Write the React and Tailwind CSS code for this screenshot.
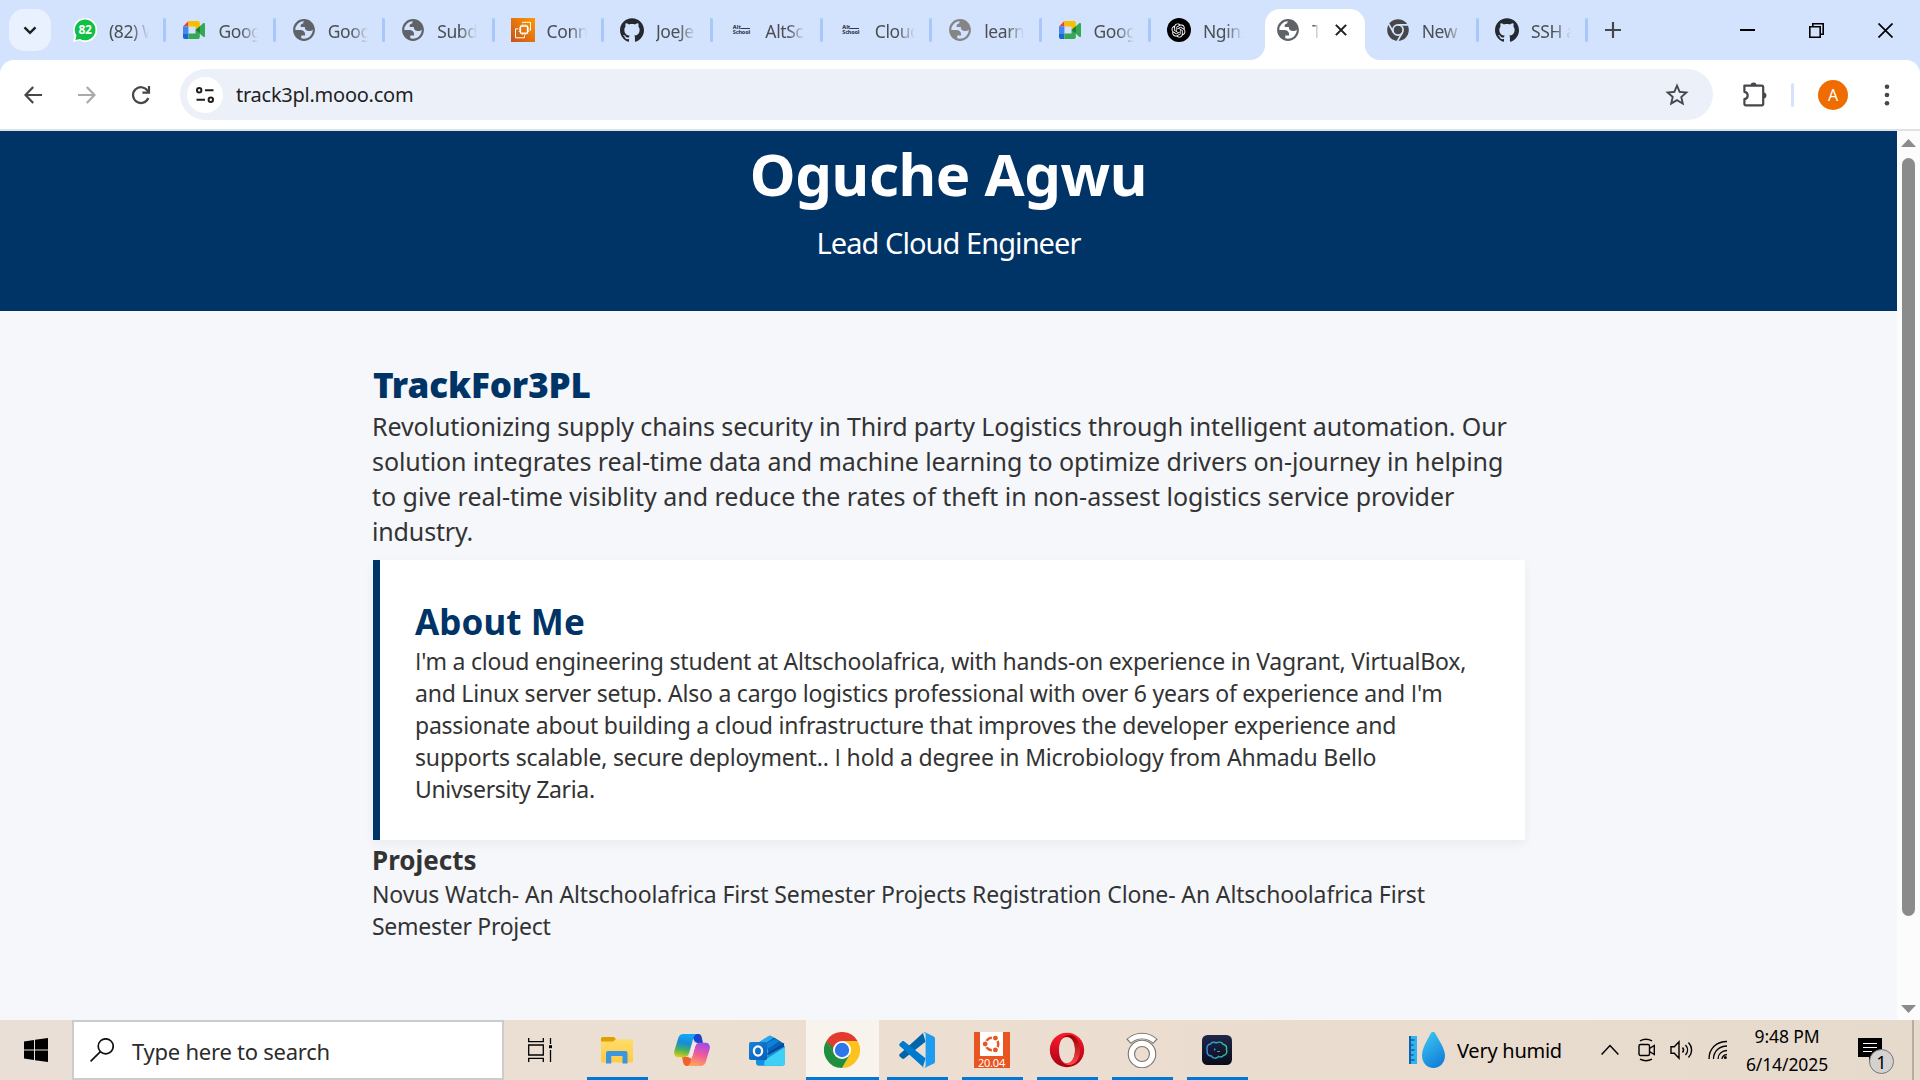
import { RiOpenaiFill } from "react-icons/ri";
import { SiGithub } from "react-icons/si";
import { MdStarBorder } from "react-icons/md";

/* ---------- favicons ---------- */

function GlobeIcon({ className = "text-[#5f6368]" }) {
  return (
    <svg viewBox="1 1 22 22" className={`h-6 w-6 shrink-0 ${className}`}>
      <path
        fill="currentColor"
        fillRule="evenodd"
        d="M12 2c5.523 0 10 4.477 10 10s-4.477 10-10 10S2 17.523 2 12 6.477 2 12 2zM4 12h4.400c3.407.022 4.922 1.730 4.543 5.127H9.488v2.470a8.004 8.004 0 0 0 10.498-8.083C19.327 12.504 18.206 13 16.622 13c-2.610 0-3.916-1.250-3.916-3.750H8.974C8.690 7.088 9.437 6.006 11.216 6.006c0-.977.326-1.655.979-2.003A8 8 0 0 0 4 12z"
      />
    </svg>
  );
}

function MeetIcon() {
  return (
    <svg viewBox="0 0 24 24" className="h-6 w-6 shrink-0">
      <path d="M1 8.400 6.400 3v5.400z" fill="#ea4335" />
      <path d="M1 8.400h5.400v7.200H1z" fill="#4285f4" />
      <path d="M1 15.600h5.400V21H2.800A1.800 1.800 0 0 1 1 19.200z" fill="#1967d2" />
      <path d="M6.400 3H16a1.800 1.800 0 0 1 1.800 1.800v3.700L13.500 12V8.400H6.400z" fill="#fbbc04" />
      <path d="M6.400 21v-5.400h7.100V12l4.300 3.500v3.700A1.800 1.800 0 0 1 16 21z" fill="#34a853" />
      <path d="M13.500 12l7.700-6.800c.7-.6 1.800-.2 1.800.8v12c0 1-1.100 1.400-1.800.8z" fill="#34a853" />
      <path d="M13.500 12l4.300-3.700v7.200z" fill="#188038" />
    </svg>
  );
}

function WhatsAppIcon() {
  return (
    <span className="relative flex h-6 w-6 shrink-0 items-center justify-center">
      <svg viewBox="0 0 24 24" className="absolute inset-0 h-6 w-6">
        <path d="M12 0a12 12 0 1 1-5.400 22.600L0 24l1.500-6.300A12 12 0 0 1 12 0z" fill="#fff" />
        <path d="M12 1.500a10.400 10.400 0 1 1-5 19.500l-4.600 1.100 1.100-4.500A10.400 10.400 0 0 1 12 1.500z" fill="#0fc143" />
      </svg>
      <span className="relative text-[12px] leading-none font-bold tracking-[-0.3px] text-white">82</span>
    </span>
  );
}

function Ec2Icon() {
  return (
    <svg viewBox="0 0 24 24" className="h-6 w-6 shrink-0">
      <defs>
        <linearGradient id="ec2" x1="0" y1="1" x2="1" y2="0">
          <stop offset="0" stopColor="#c8511b" />
          <stop offset="1" stopColor="#f90" />
        </linearGradient>
      </defs>
      <path d="M0 0h24v24H0z" fill="url(#ec2)" />
      <g fill="none" stroke="#fff" strokeWidth="1">
        <path d="M9.500 8.200h7v7h-7z" strokeWidth="1.300" />
        <path d="M11.300 6.500v1.700M13 6.500v1.700M14.800 6.500v1.700M11.300 15.200v1.700M13 15.200v1.700M14.800 15.200v1.700M7.800 10h1.700M7.800 11.700h1.700M7.800 13.400h1.700M16.500 10h1.700M16.500 11.700h1.700M16.500 13.400h1.700" />
        <path d="M11.500 5.200V4.300h8v8h-1M7 10.800H4.500v9h9v-2.300" />
      </g>
    </svg>
  );
}

function GithubIcon() {
  return <SiGithub className="h-6 w-6 shrink-0 text-[#24292f]" />;
}

function AltSchoolIcon() {
  return (
    <span className="flex h-6 w-6 shrink-0 flex-col items-center justify-center text-[5.500px] leading-[5px] font-extrabold text-[#33384d]">
      <span className="flex w-[17px] items-center">
        Alt
        <span className="mt-[2px] h-px flex-1 bg-[#33384d]" />
      </span>
      <span className="w-[17px] tracking-[-0.2px]">School</span>
    </span>
  );
}

function OpenAiIcon() {
  return (
    <span className="flex h-6 w-6 shrink-0 items-center justify-center rounded-full bg-black">
      <RiOpenaiFill className="h-[17px] w-[17px] text-white" />
    </span>
  );
}

function ChromeMonoIcon() {
  return (
    <svg viewBox="0 0 24 24" className="h-6 w-6 shrink-0">
      <circle cx="12" cy="12" r="10.800" fill="#45474a" />
      <g stroke="#d3e3fd" strokeWidth="1.700" fill="none">
        <path d="M12 6.900h10M7.600 14.500l-5-8.700M16.400 14.500l-5 8.700" />
        <circle cx="12" cy="12" r="5.100" />
      </g>
      <circle cx="12" cy="12" r="4" fill="#45474a" />
    </svg>
  );
}

/* ---------- browser chrome ---------- */

const tabs = [
  { icon: <WhatsAppIcon />, title: "(82) W", sep: true },
  { icon: <MeetIcon />, title: "Goog", sep: true },
  { icon: <GlobeIcon />, title: "Goog", sep: true },
  { icon: <GlobeIcon />, title: "Subd", sep: true },
  { icon: <Ec2Icon />, title: "Conn", sep: true },
  { icon: <GithubIcon />, title: "JoeJe", sep: true },
  { icon: <AltSchoolIcon />, title: "AltSc", sep: true },
  { icon: <AltSchoolIcon />, title: "Cloud", sep: true },
  { icon: <GlobeIcon className="text-[#858585]" />, title: "learn", sep: true },
  { icon: <MeetIcon />, title: "Goog", sep: true },
  { icon: <OpenAiIcon />, title: "Nginx", sep: false },
  { icon: <GlobeIcon />, title: "T", active: true },
  { icon: <ChromeMonoIcon />, title: "New", sep: true },
  { icon: <GithubIcon />, title: "SSH a", sep: true },
];

function Tab({ icon, title, sep }) {
  return (
    <div className="flex h-full w-[109.400px] shrink-0 items-center">
      <div className="flex flex-1 items-center pl-[16px]">
        {icon}
        <span className="ml-[12px] w-[41px] overflow-hidden pt-[2px] text-[17.500px] leading-6 tracking-[-0.400px] whitespace-nowrap text-[#4c4e52] [mask-image:linear-gradient(to_right,black_55%,transparent_98%)]">
          {title}
        </span>
      </div>
      <span className={sep ? "h-6 w-[3px] rounded-full bg-[#a8c7fa]" : "w-[3px]"} />
    </div>
  );
}

function ActiveTab({ icon, title }) {
  return (
    <div className="flex h-full w-[109.400px] shrink-0 items-end pl-[5px]">
      <div className="relative flex h-[51px] w-[100px] items-start rounded-t-[15px] bg-white pt-[9px] pl-[11px]">
        <span className="absolute bottom-0 -left-[15px] h-[15px] w-[15px] bg-[radial-gradient(circle_at_0_0,transparent_14.500px,white_15.500px)]" />
        <span className="absolute -right-[15px] bottom-0 h-[15px] w-[15px] bg-[radial-gradient(circle_at_100%_0,transparent_14.500px,white_15.500px)]" />
        {icon}
        <span className="ml-[12px] w-[6px] overflow-hidden pt-px text-[17.500px] leading-6 text-[#45474a] [mask-image:linear-gradient(to_right,black_20%,transparent_105%)]">
          {title}
        </span>
        <svg viewBox="0 0 14 14" className="mt-[6px] ml-[17px] h-3 w-3 shrink-0" fill="none" stroke="#1f1f1f" strokeWidth="2.400">
          <path d="M1 1l12 12M13 1L1 13" />
        </svg>
      </div>
    </div>
  );
}

function TabStrip() {
  return (
    <div className="flex h-[60px] items-center bg-[#d3e3fd]">
      <div className="ml-[9px] flex h-[42px] w-[42px] shrink-0 items-center justify-center rounded-[15px] bg-[#e9f1fe]">
        <svg viewBox="0 0 14 9" className="h-[9px] w-[14px]" fill="none" stroke="#1f1f1f" strokeWidth="2.400">
          <path d="M1.500 1.300L7 6.800l5.500-5.500" />
        </svg>
      </div>
      <div className="ml-[6px] flex h-full items-center">
        {tabs.map((t, i) => (t.active ? <ActiveTab key={i} {...t} /> : <Tab key={i} {...t} />))}
      </div>
      <svg viewBox="0 0 16 16" className="ml-[17px] h-4 w-4" fill="none" stroke="#45474a" strokeWidth="2.200">
        <path d="M8 0v16M0 8h16" />
      </svg>
      <div className="mr-[27px] ml-auto flex items-center gap-[54px]">
        <svg viewBox="0 0 15 15" className="h-[15px] w-[15px]">
          <path d="M0 6h15v2H0z" />
        </svg>
        <svg viewBox="0 0 15 15" className="h-[15px] w-[15px]" fill="none" stroke="#000" strokeWidth="1.600">
          <path d="M.8 3.800h10.400v10.400H.8zM3.800 3.800V.8h10.400v10.400h-3" />
        </svg>
        <svg viewBox="0 0 15 15" className="h-[15px] w-[15px]" fill="none" stroke="#000" strokeWidth="1.700">
          <path d="M.5.5l14 14M14.500.5l-14 14" />
        </svg>
      </div>
    </div>
  );
}

function Toolbar() {
  return (
    <div className="bg-[#d3e3fd]">
      <div className="flex h-[71px] items-center rounded-t-[14px] border-b-2 border-[#e1e2e5] bg-white">
        <svg viewBox="0 0 18 18" className="ml-[24px] h-[18px] w-[18px]" fill="none" stroke="#45474a" strokeWidth="2.200">
          <path d="M9.200.9L1.500 9l7.700 8.100M1.700 9H18" />
        </svg>
        <svg viewBox="0 0 18 18" className="ml-[36px] h-[18px] w-[18px]" fill="none" stroke="#a9aaab" strokeWidth="2.200">
          <path d="M8.800.9L16.500 9l-7.700 8.100M16.300 9H0" />
        </svg>
        <svg viewBox="0 0 20 20" className="ml-[35px] h-5 w-5" fill="none" stroke="#45474a" strokeWidth="2.200">
          <path d="M17.300 13A7.900 7.900 0 1 1 16.500 5.700L18 7.500" />
          <path d="M18 1v6.700h-6.600" />
        </svg>
        <div className="ml-[29px] flex h-[51px] w-[1533px] items-center rounded-full bg-[#ecf0f9] pr-[22px] pl-[7px]">
          <div className="flex h-9 w-9 items-center justify-center rounded-full bg-white">
            <svg viewBox="0 0 18 16" className="h-[16px] w-[18px]" fill="none" stroke="#1f1f1f" strokeWidth="2">
              <circle cx="3.200" cy="3.200" r="2.200" />
              <circle cx="14.800" cy="12.800" r="2.200" />
              <path d="M9 3.200h8.500M.5 12.800H9" />
            </svg>
          </div>
          <span className="ml-[13px] text-[20px] leading-7 tracking-[-0.250px] text-[#1f1f1f]">track3pl.mooo.com</span>
          <MdStarBorder className="ml-auto h-[28px] w-[28px] text-[#45474a]" />
        </div>
        <svg viewBox="0 0 25 25" className="ml-[29px] h-[25px] w-[25px]">
          <path
            d="M2.400 3.600h17.200a1.600 1.600 0 0 1 1.600 1.600v16.600a1.600 1.600 0 0 1-1.600 1.600H3.900a1.500 1.500 0 0 1-1.500-1.500v-4.700c2.300-.4 3.300-1.900 3.300-3.700s-1-3.300-3.300-3.700z"
            fill="none"
            stroke="#45474a"
            strokeWidth="2.200"
            strokeLinejoin="round"
          />
          <path d="M8.600 3.600a3 3 0 0 1 6 0zM21.400 10.400a3 3 0 0 1 0 6z" fill="#45474a" />
        </svg>
        <span className="ml-[24px] h-6 w-[3px] rounded-full bg-[#d3e3fd]" />
        <span className="ml-[24px] flex h-[30px] w-[30px] items-center justify-center rounded-full bg-[#ef6c00] text-[16px] leading-none text-white">
          A
        </span>
        <svg viewBox="0 0 6 24" className="ml-[36px] h-6 w-[6px]" fill="#45474a">
          <circle cx="3" cy="3.800" r="2.300" />
          <circle cx="3" cy="12" r="2.300" />
          <circle cx="3" cy="20.200" r="2.300" />
        </svg>
      </div>
    </div>
  );
}

/* ---------- web page ---------- */

/* Capital I without serifs */
function PlainI() {
  return <span className="font-['Open_Sans']">I</span>;
}

function Page() {
  return (
    <div className="flex h-[889px]">
      <div className="w-[1897px] bg-[#f5f7fb] text-[#333]">
        <header className="h-[180px] bg-[#003366] text-center text-white">
          <h1 className="text-[58px] leading-[86px] font-bold tracking-[-0.400px]">Oguche Agwu</h1>
          <p className="mt-[6px] text-[29px] leading-10 tracking-[-0.940px]">Lead Cloud Engineer</p>
        </header>
        <main className="ml-[373px] w-[1152px] pt-[52px] whitespace-nowrap">
          <h2 className="text-[35px] leading-[44px] font-black tracking-[-0.100px] text-[#003366]">TrackFor3PL</h2>
          <div className="mt-[2px] text-[25px] leading-[35px]">
            <p className="-ml-px tracking-[-0.110px]">Revolutionizing supply chains security in Third party Logistics through intelligent automation. Our</p>
            <p className="-ml-px tracking-[-0.080px]">solution integrates real-time data and machine learning to optimize drivers on-journey in helping</p>
            <p className="-ml-px tracking-[-0.020px]">to give real-time visiblity and reduce the rates of theft in non-assest logistics service provider</p>
            <p className="-ml-px tracking-[-0.150px]">industry.</p>
          </div>
          <section className="mt-[11px] h-[280px] border-l-7 border-[#003366] bg-white pt-[41px] pl-[35px] shadow-[0_4px_10px_rgba(0,0,0,0.05)]">
            <h2 className="text-[35px] leading-[42px] font-bold tracking-[0.100px] text-[#003366]">About Me</h2>
            <div className="mt-[2px] text-[23px] leading-8">
              <p className="tracking-[-0.215px]"><PlainI />'m a cloud engineering student at Altschoolafrica, with hands-on experience in Vagrant, VirtualBox,</p>
              <p className="tracking-[-0.220px]">and Linux server setup. Also a cargo logistics professional with over 6 years of experience and <PlainI />'m</p>
              <p className="tracking-[-0.235px]">passionate about building a cloud infrastructure that improves the developer experience and</p>
              <p className="tracking-[-0.170px]">supports scalable, secure deployment.. <PlainI /> hold a degree in Microbiology from Ahmadu Bello</p>
              <p className="tracking-[-0.330px]">Univsersity Zaria.</p>
            </div>
          </section>
          <h3 className="mt-1 -ml-px text-[26px] leading-8 font-bold">Projects</h3>
          <div className="mt-[2px] text-[23px] leading-8">
            <p className="-ml-px tracking-[-0.130px]">Novus Watch- An Altschoolafrica First Semester Projects Registration Clone- An Altschoolafrica First</p>
            <p className="-ml-px tracking-[-0.280px]">Semester Project</p>
          </div>
        </main>
      </div>
      <div className="flex w-[23px] flex-col items-center bg-[#fcfcfc] pt-2 pb-[7px]">
        <svg viewBox="0 0 15 8" className="h-2 w-[15px]" fill="#8b8b8b">
          <path d="M7.500 0L15 8H0z" />
        </svg>
        <div className="mt-[11px] h-[758px] w-[13px] rounded-full bg-[#8b8b8b]" />
        <svg viewBox="0 0 15 8" className="mt-auto h-2 w-[15px]" fill="#8b8b8b">
          <path d="M7.500 8L0 0h15z" />
        </svg>
      </div>
    </div>
  );
}

/* ---------- taskbar icons ---------- */

function FolderIcon() {
  return (
    <svg viewBox="0 0 36 36" className="h-9 w-9">
      <defs>
        <linearGradient id="fold" x1="0" y1="0" x2="0" y2="1">
          <stop offset="0" stopColor="#ffdc6b" />
          <stop offset="1" stopColor="#ffcb45" />
        </linearGradient>
      </defs>
      <path d="M2 6.500A1.500 1.500 0 0 1 3.500 5H15l2 2-2 3H2z" fill="#e0a100" />
      <path d="M2 9.500h12l3-2.200h15.500A1.500 1.500 0 0 1 34 8.800V29a1.500 1.500 0 0 1-1.500 1.500h-29A1.500 1.500 0 0 1 2 29z" fill="url(#fold)" />
      <path d="M7 31.500V21a2 2 0 0 1 2-2h17.500a2 2 0 0 1 2 2v10.500h-5V24H12.300v7.500z" fill="#3a96dd" />
    </svg>
  );
}

function CopilotIcon() {
  return (
    <svg viewBox="0 0 36 36" className="h-9 w-9">
      <defs>
        <linearGradient id="cpa" x1="0.300" y1="0" x2="0.100" y2="1">
          <stop offset="0" stopColor="#12a5f4" />
          <stop offset="0.350" stopColor="#178bd8" />
          <stop offset="0.650" stopColor="#49b35c" />
          <stop offset="1" stopColor="#f2cf0c" />
        </linearGradient>
        <linearGradient id="cpb" x1="0.700" y1="0" x2="0.400" y2="1">
          <stop offset="0" stopColor="#a348e8" />
          <stop offset="0.500" stopColor="#ee5b9b" />
          <stop offset="1" stopColor="#ffa35c" />
        </linearGradient>
      </defs>
      <path d="M17 2h7.500c2 0 2.800 1.600 3.300 3.400L29 11h-5c-2 0-3.300-1-4-3z" fill="#1b45d0" />
      <path d="M19 34h-6.500c-2 0-2.800-1.600-3.300-3.400L8 25h6c2 0 3 1 3.600 3z" fill="#f4602b" />
      <path d="M9.500 2h13c-2.200.8-3 3.500-3.800 6.500l-3.500 12c-.9 3-2.200 4.700-5.200 4.700H4.500C1 25.200-.4 22.500.3 19L4.300 6c.8-2.600 2.400-4 5.200-4z" fill="url(#cpa)" />
      <path d="M26.500 34h-13c2.200-.8 3-3.500 3.800-6.500l3.500-12c.9-3 2.200-4.700 5.200-4.700h5.500c3.500 0 4.900 2.700 4.200 6.200l-4 13c-.8 2.600-2.400 4-5.200 4z" fill="url(#cpb)" />
      <path d="M18.500 12.500c1-1.300 2-1.700 3.300-1.700h.4l-3.700 13c-.6 1.500-1.500 2-3.800 2z" fill="#f4e9ee" />
    </svg>
  );
}

function OutlookIcon() {
  return (
    <svg viewBox="0 0 36 36" className="h-9 w-9">
      <defs>
        <linearGradient id="olk" x1="0" y1="0" x2="1" y2="1">
          <stop offset="0" stopColor="#1784d8" />
          <stop offset="1" stopColor="#0a5cb8" />
        </linearGradient>
      </defs>
      <path d="M7 12L19.500 3.900a3 3 0 0 1 3 0L35 12v6L16 25l-9-3z" fill="#28a8ea" />
      <path d="M17 11l8-5.500L35.500 12 20 22z" fill="#0364b8" />
      <path d="M16 12l10-5 4 2.500L14 20z" fill="#1180d8" />
      <path d="M18 21.500L35 11v5L20 24.500z" fill="#0c4595" />
      <path d="M7 21l10 3 19-10v16.500a3.300 3.300 0 0 1-3.300 3.300H10A3 3 0 0 1 7 31z" fill="#1490df" />
      <path d="M36 15v15.500a3.300 3.300 0 0 1-3.300 3.300H16c-2-2.500 0-6 2.500-7.500z" fill="#3fd0f8" />
      <rect x="0" y="10" width="18" height="18" rx="1.800" fill="url(#olk)" />
      <ellipse cx="9" cy="19" rx="4.100" ry="4.700" fill="none" stroke="#fff" strokeWidth="2.300" />
    </svg>
  );
}

function ChromeIcon() {
  return (
    <svg viewBox="0 0 36 36" className="h-9 w-9">
      <path d="M18 18L2.400 9A18 18 0 0 1 33.600 9z" fill="#e33b2e" />
      <path d="M18 9h15.600A18 18 0 0 1 18 36l7.800-13.500z" fill="#fcc31e" />
      <path d="M25.800 22.500L18 36A18 18 0 0 1 2.400 9l7.800 13.500z" fill="#1f8e3e" />
      <path d="M2.400 9H18v9l-7.800 4.500z" fill="#e33b2e" />
      <path d="M2.400 9l7.800 13.500L14 20z" fill="#1f8e3e" />
      <circle cx="18" cy="18" r="9" fill="#fff" />
      <circle cx="18" cy="18" r="7.200" fill="#2f76ea" />
    </svg>
  );
}

function VsCodeIcon() {
  return (
    <svg viewBox="0 0 36 36" className="h-9 w-9">
      <path d="M26.500 9.800L5.300 26.600c-.8.6-1.600.6-2.300 0l-2.200-2c-.8-.8-.8-2 0-2.700L24 1z" fill="#0065a9" />
      <path d="M26.500 26.200L5.300 9.400c-.8-.6-1.600-.6-2.300 0l-2.200 2c-.8.8-.8 2 0 2.700L24 35z" fill="#007acc" />
      <path d="M26 35.800c-1 .5-2 .2-2.800-.5 1.300 1 3.400.2 3.400-1.600V2.300c0-1.800-2.100-2.600-3.400-1.600.8-.7 1.800-1 2.800-.5l8.300 4c1 .4 1.700 1.300 1.700 2.400v22.800c0 1.100-.7 2-1.700 2.400z" fill="#1f9cf0" />
    </svg>
  );
}

function UbuntuIcon() {
  return (
    <span className="flex h-9 w-9 flex-col items-center bg-[#e95420]">
      <svg viewBox="0 0 23 24" className="h-6 w-[23px]">
        <path d="M0 0h23v24H0z" fill="#fff" />
        <circle cx="12" cy="12" r="6.300" fill="none" stroke="#e95420" strokeWidth="2.500" />
        <g fill="#e95420" stroke="#fff" strokeWidth="1.200">
          <circle cx="5.200" cy="12" r="3" />
          <circle cx="15.400" cy="6.100" r="3" />
          <circle cx="15.400" cy="17.900" r="3" />
        </g>
      </svg>
      <span className="mt-[2px] text-[11px] leading-[10px] tracking-[-0.200px] text-white">20.04</span>
    </span>
  );
}

function OperaIcon() {
  return (
    <svg viewBox="0 0 36 36" className="h-9 w-9">
      <defs>
        <linearGradient id="opa" x1="0" y1="0" x2="0" y2="1">
          <stop offset="0" stopColor="#ff1b2d" />
          <stop offset="1" stopColor="#a70014" />
        </linearGradient>
        <linearGradient id="opb" x1="0" y1="0" x2="0" y2="1">
          <stop offset="0" stopColor="#9c0000" />
          <stop offset="1" stopColor="#ff4b4b" />
        </linearGradient>
      </defs>
      <path
        fillRule="evenodd"
        d="M18 .8c9.600 0 17.200 7.700 17.200 17.200S27.600 35.200 18 35.200.8 27.500.8 18 8.400.8 18 .8zm0 3.700c-4.800 0-8 5.700-8 13.500s3.200 13.500 8 13.500 8-5.700 8-13.500-3.200-13.500-8-13.500z"
        fill="url(#opa)"
      />
      <path d="M12 7.600C14 4.800 17 3 20.200 3 27 3 31 9.700 31 18s-4 15-10.800 15c-3.200 0-6.200-1.800-8.200-4.600 5.300 5.600 14 2.600 14-10.400S17.300 2 12 7.600z" fill="url(#opb)" />
    </svg>
  );
}

function OpenVpnIcon() {
  return (
    <svg viewBox="0 0 36 36" className="h-9 w-9">
      <g fill="none">
        <path d="M4.600 9.600C12 2.200 24 2.200 31.400 9.600" stroke="#7d746c" strokeWidth="6.600" />
        <path d="M5.400 8.800C12.500 2.500 23.500 2.500 30.600 8.800" stroke="#fff" strokeWidth="4.600" />
        <circle cx="18" cy="22" r="10.600" stroke="#7d746c" strokeWidth="7.400" />
        <circle cx="18" cy="22" r="10.600" stroke="#fff" strokeWidth="5.200" />
      </g>
    </svg>
  );
}

function TermiusIcon() {
  return (
    <svg viewBox="0 0 30 30" className="h-[30px] w-[30px]">
      <defs>
        <linearGradient id="trb" x1="0" y1="0" x2="0" y2="1">
          <stop offset="0" stopColor="#20264a" />
          <stop offset="1" stopColor="#090c1a" />
        </linearGradient>
        <linearGradient id="trl" x1="0" y1="0" x2="1" y2="0">
          <stop offset="0" stopColor="#2f8fe8" />
          <stop offset="1" stopColor="#2fc487" />
        </linearGradient>
      </defs>
      <rect width="30" height="30" rx="5.500" fill="url(#trb)" />
      <path
        d="M8.500 9c1-2 3.800-2.400 5.800-1.100 2.300-1 5.500-1 6.700 1.300 2.700.3 4.300 2.800 3.400 5.300 1.400 2.500-.2 5.600-2.900 5.900-1.300 1.700-3.300 1.900-4.900 1-1.700 2.400-5.600 2.300-7.100-.3-3 0-5-2.500-4.200-5.100-1.300-3.600.2-6.600 3.200-7z"
        fill="none"
        stroke="url(#trl)"
        strokeWidth="1.500"
      />
      <path d="M12 13l2 1.500-2 1.500z" fill="#2f8fe8" />
      <path d="M15 16.500h3" stroke="#2fa0c8" strokeWidth="1" />
    </svg>
  );
}

const apps = [
  { icon: <FolderIcon />, open: true },
  { icon: <CopilotIcon />, open: false },
  { icon: <OutlookIcon />, open: false },
  { icon: <ChromeIcon />, open: true, active: true },
  { icon: <VsCodeIcon />, open: true },
  { icon: <UbuntuIcon />, open: true },
  { icon: <OperaIcon />, open: true },
  { icon: <OpenVpnIcon />, open: true },
  { icon: <TermiusIcon />, open: true },
];

function AppButton({ icon, open, active }) {
  return (
    <div className="flex w-[75px] justify-center">
      <div className={`flex h-full flex-col items-center ${active ? "w-[73px] bg-[#f8f3ed]" : "w-[61px]"}`}>
        <span className="flex flex-1 items-center pt-[3px] pr-[2px]">{icon}</span>
        <span className={`h-[3px] w-full ${open ? "bg-[#0078d7]" : ""}`} />
      </div>
    </div>
  );
}

function Taskbar() {
  return (
    <div className="flex h-[60px] bg-linear-to-r from-[#eadfd6] via-[#ecdfd1] to-[#e6dacd] text-black">
      <div className="flex w-[72px] items-center justify-center">
        <svg viewBox="0 0 24 24" className="h-6 w-6">
          <path d="M0 3.400L10 2v9.500H0zM11 1.800L24 0v11.500H11zM0 12.500h10V22L0 20.600zM11 12.500h13V24l-13-1.800z" />
        </svg>
      </div>
      <div className="flex w-[432px] items-center border-2 border-[#ccc] bg-white pl-[16px]">
        <svg viewBox="0 0 24 24" className="h-6 w-6" fill="none" stroke="#111" strokeWidth="1.700">
          <circle cx="15.700" cy="8.300" r="7.500" />
          <path d="M10.400 13.600L.6 23.400" />
        </svg>
        <span className="ml-[18px] pt-px text-[22px] leading-8 tracking-[-0.240px] text-[#2b2b2b]">Type here to search</span>
      </div>
      <div className="flex w-[76px] items-center pl-[24px]">
        <svg viewBox="0 0 24 24" className="h-6 w-6" fill="none" stroke="#000" strokeWidth="1.300">
          <path d="M.7 0v3.700h14.600V0M.7 7h14.600v10H.7zM.7 24v-3.700h14.600V24M22.500 0v6M22.500 12v12" />
          <path d="M21 7.200h3v3h-3z" fill="#000" stroke="none" />
        </svg>
      </div>
      {apps.map((a, i) => (
        <AppButton key={i} {...a} />
      ))}
      <div className="ml-auto flex items-center">
        <svg viewBox="0 0 36 36" className="h-9 w-9">
          <defs>
            <linearGradient id="drop" x1="0" y1="0" x2="0.500" y2="1">
              <stop offset="0" stopColor="#3ecbf2" />
              <stop offset="1" stopColor="#1583dc" />
            </linearGradient>
          </defs>
          <path d="M0 4h8v28H0z" fill="#2fb4f0" />
          <path d="M0 4h2v28H0z" fill="#155fa8" />
          <path d="M2 8h3.500M2 13h2.500M2 18h3.500M2 23h2.500M2 28h3.500" stroke="#155fa8" strokeWidth="1.500" />
          <path d="M22 1c1-1.400 3.200-1.400 4 0 3.500 6.500 10 15.500 10 22.500C36 30.500 31 36 24.500 36S13 30.500 13 23.500C13 16.500 18.500 7.500 22 1z" fill="url(#drop)" />
        </svg>
        <span className="ml-[12px] w-[105px] pt-[2px] text-[20px] leading-7 tracking-[-0.250px] whitespace-nowrap">Very humid</span>
        <svg viewBox="0 0 18 12" className="ml-[39px] h-3 w-[18px]" fill="none" stroke="#000" strokeWidth="1.500">
          <path d="M.6 10.500L9 1.600l8.400 8.900" />
        </svg>
        <svg viewBox="0 0 18 24" className="ml-[19px] h-6 w-[18px]" fill="none" stroke="#000" strokeWidth="1.400">
          <rect x="1" y="6.500" width="10.500" height="11" rx="1.500" />
          <path d="M11.500 10.500l4.800-3v9l-4.800-3M2 2.800c3.500-1.800 8.500-1.800 12 0M2 21.200c3.500 1.800 8.500 1.800 12 0" />
        </svg>
        <svg viewBox="0 0 24 20" className="ml-[14px] h-5 w-6" fill="none" stroke="#000" strokeWidth="1.400">
          <path d="M1 6.800h3.300L9 1.800v16.400l-4.700-5H1zM12.500 7.500c1.300 1.500 1.300 3.500 0 5M15.500 5c2.700 3 2.700 7 0 10M18.500 2.500c4.200 4.500 4.200 10.500 0 15" />
        </svg>
        <svg viewBox="0 0 20 20" className="ml-[14px] h-5 w-5" fill="none" stroke="#000" strokeWidth="1.300">
          <path d="M1 19C1 8.500 8.500 1.500 19 1.500M5.500 19C5.500 11.500 11 6 19 6M10 19c0-5 4-8.500 9-8.500M14 19c0-2.500 2-4.300 5-4.300" />
          <circle cx="17.300" cy="17.500" r="1.500" fill="#000" stroke="none" />
        </svg>
        <div className="ml-[15px] flex w-[88px] flex-col items-center pb-px text-[17.500px] leading-[28px] tracking-[-0.100px]">
          <span>9:48 PM</span>
          <span>6/14/2025</span>
        </div>
        <div className="relative ml-[27px] h-6 w-6">
          <svg viewBox="0 0 24 24" className="h-6 w-6">
            <path d="M0 0h24v19H16.500L11 24.500V19H0z" />
            <path d="M5 5.500h14M5 9.500h14M5 13.500h9" stroke="#fff" strokeWidth="1.200" />
          </svg>
          <span className="absolute top-[11px] left-[11px] flex h-[25px] w-[25px] items-center justify-center rounded-full border border-[#777] bg-[#d4d2d0] text-[18px] leading-none">
            1
          </span>
        </div>
        <span className="mr-[6px] ml-[30px] h-[60px] w-[2px] bg-[#b8ada2]" />
      </div>
    </div>
  );
}

export default function App() {
  return (
    <div className="h-[1080px] w-[1920px] overflow-hidden bg-white font-['Noto_Sans','Open_Sans',sans-serif]">
      <TabStrip />
      <Toolbar />
      <Page />
      <Taskbar />
    </div>
  );
}
